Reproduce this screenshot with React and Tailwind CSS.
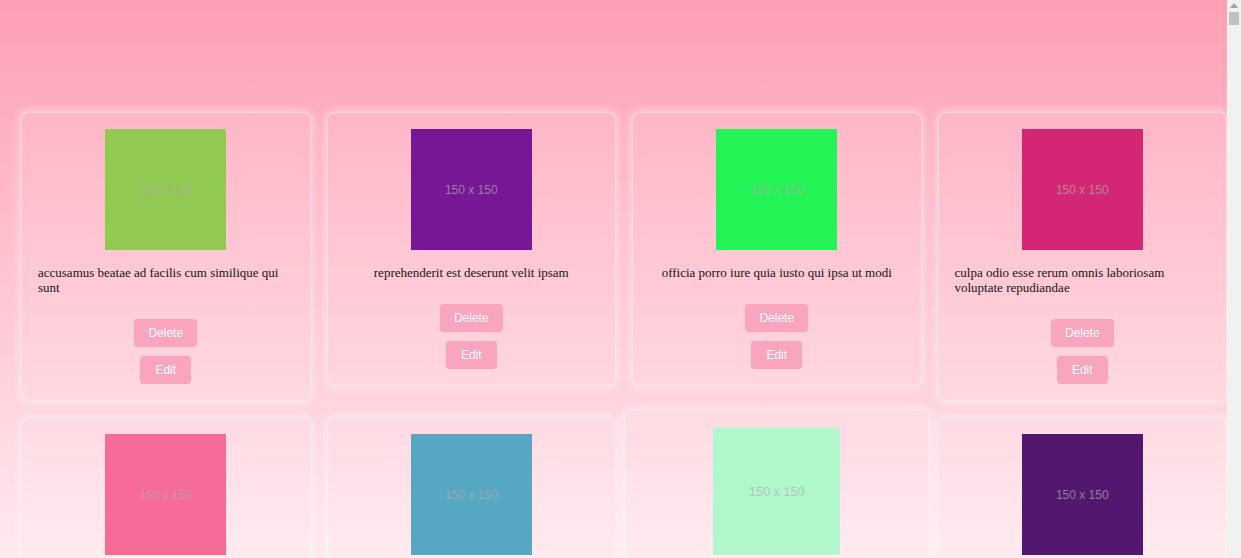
import React from "react";

const photos = [
  { title: "accusamus beatae ad facilis cum similique qui sunt", color: "#92c952" },
  { title: "reprehenderit est deserunt velit ipsam", color: "#771796" },
  { title: "officia porro iure quia iusto qui ipsa ut modi", color: "#24f355" },
  { title: "culpa odio esse rerum omnis laboriosam voluptate repudiandae", color: "#d32776" },
  { title: "natus nisi omnis corporis facere molestiae rerum in", color: "#f66b97" },
  { title: "accusamus ea aliquid et amet sequi nemo", color: "#56a8c2" },
  { title: "officia delectus consequatur vero aut veniam explicabo molestias", color: "#b0f7cc", hover: true },
  { title: "aut porro officiis laborum odit ea laudantium corporis", color: "#54176f" },
  { title: "qui eius qui autem sed", color: "#51aa97" },
  { title: "beatae et provident et ut vel", color: "#810b14" },
  { title: "nihil at amet non hic quia qui", color: "#1ee8a4" },
  { title: "mollitia soluta ut rerum eos aliquam consequatur perspiciatis maiores", color: "#66b7d2" },
];

function Card({ title, color, hover }) {
  return (
    <div
      className={
        "flex flex-col items-center rounded-lg border border-white/40 bg-white/10 p-4 shadow-[0_0_8px_2px_rgba(255,255,255,0.45)] transition-transform " +
        (hover ? "scale-105 relative z-10" : "")
      }
    >
      <div
        className="flex h-[121px] w-[121px] shrink-0 items-center justify-center"
        style={{ backgroundColor: color }}
      >
        <span className="font-['Liberation_Sans',Arial,sans-serif] text-[12px] text-[rgba(175,175,175,0.7)]">
          150 x 150
        </span>
      </div>
      <p className="mt-[15px] font-['Liberation_Serif','Times_New_Roman',serif] text-[13px] leading-[15px] text-[#141414]">
        {title}
      </p>
      <button className="mt-6 rounded-[4px] bg-[#f9a5bd] px-[14px] py-[7px] font-['Liberation_Sans',Arial,sans-serif] text-[12px] leading-[14px] text-white">
        Delete
      </button>
      <button className="mt-[9px] rounded-[4px] bg-[#f9a5bd] px-[15px] py-[7px] font-['Liberation_Sans',Arial,sans-serif] text-[12px] leading-[14px] text-white">
        Edit
      </button>
    </div>
  );
}

export default function App() {
  return (
    <div className="min-h-screen bg-gradient-to-b from-[#fd9fb5] to-[#ffe9ef] bg-fixed pb-10 pl-[21px] pr-[14px] pt-[112px]">
      <div className="grid grid-cols-4 items-start gap-4">
        {photos.map((p, i) => (
          <Card key={i} {...p} />
        ))}
      </div>
      <div className="fixed right-0 top-0 z-20 flex h-screen w-[14px] flex-col items-center bg-[#f1f1f1]">
        <div className="mt-[3px] h-0 w-0 border-x-[4px] border-b-[5px] border-x-transparent border-b-[#a3a3a3]" />
        <div className="mt-[4px] h-[13px] w-[10px] bg-[#c1c1c1]" />
      </div>
    </div>
  );
}
